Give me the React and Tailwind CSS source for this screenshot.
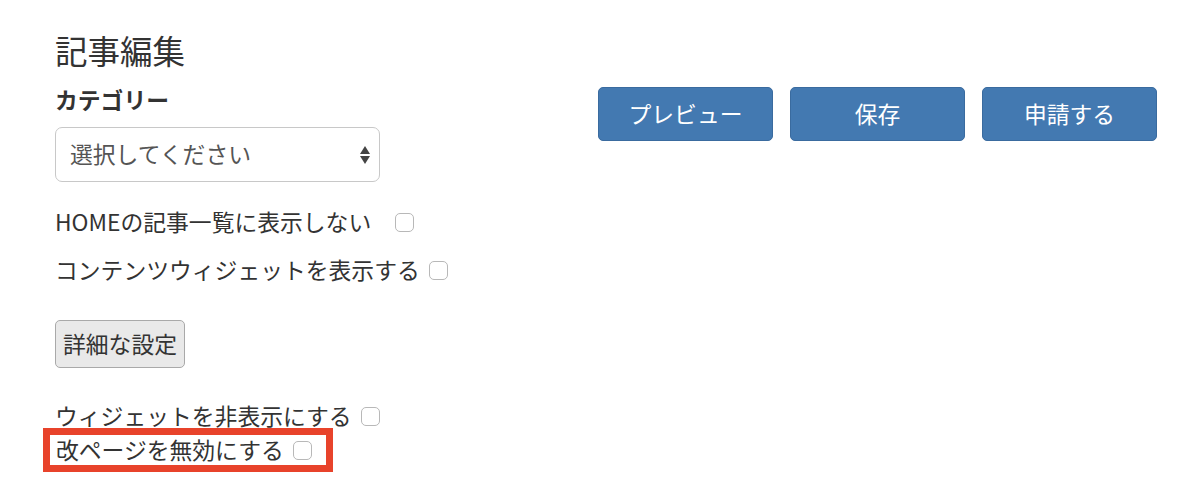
import React from "react";

function Check() {
  return (
    <input
      type="checkbox"
      className="appearance-none w-[19px] h-[19px] rounded-[5px] border border-[#b8b8b8] bg-white shrink-0"
    />
  );
}

export default function App() {
  const font = { fontFamily: '"Noto Sans CJK JP", "Noto Sans", sans-serif' };
  return (
    <div className="w-[1200px] h-[478px] bg-white text-[#333] pl-[55px]" style={font}>
      <div className="h-[72px] pt-[28px] flex items-center">
        <h1 className="text-[32.5px] leading-[44px] font-normal">記事編集</h1>
      </div>
      <div className="flex">
        <div className="w-[543px]">
          <div className="h-[32px] mt-[12px] flex items-center text-[22.8px] font-bold">カテゴリー</div>
          <div className="mt-[11px] w-[325px] h-[55px] border border-[#c8c8c8] rounded-[7px] flex items-center justify-between pl-[14px] pr-[8px]">
            <span className="text-[22.8px] text-[#555]">選択してください</span>
            <svg width="12" height="22" viewBox="0 0 12 22">
              <path d="M6 2 L11 10 L1 10 Z" fill="#444" />
              <path d="M6 20 L11 12 L1 12 Z" fill="#444" />
            </svg>
          </div>
          <div className="mt-[24px] h-[32px] flex items-center text-[22.8px]">
            <span>HOMEの記事一覧に表示しない</span>
            <span className="ml-[24px] flex"><Check /></span>
          </div>
          <div className="mt-[16px] h-[32px] flex items-center text-[22.8px]">
            <span>コンテンツウィジェットを表示する</span>
            <span className="ml-[9px] flex"><Check /></span>
          </div>
          <button className="mt-[34px] h-[48px] px-[7px] bg-[#e9e9e9] border border-[#a9a9a9] rounded-[5px] text-[22.8px] text-[#333]">
            詳細な設定
          </button>
          <div className="mt-[36px] h-[24px] flex items-center text-[22.8px]">
            <span>ウィジェットを非表示にする</span>
            <span className="ml-[9px] flex"><Check /></span>
          </div>
          <div className="-ml-[12px] w-[290px] h-[44px] border-[7px] border-[#e8432b] flex items-center pl-[6px] text-[22.8px]">
            <span>改ページを無効にする</span>
            <span className="ml-[9px] flex"><Check /></span>
          </div>
        </div>
        <div className="flex gap-[17px] mt-[15px] items-start">
          {["プレビュー", "保存", "申請する"].map((t) => (
            <button
              key={t}
              className="w-[175px] h-[54px] bg-[#4379b1] border border-[#3a6b9f] rounded-[5px] text-white text-[22.8px]"
            >
              {t}
            </button>
          ))}
        </div>
      </div>
    </div>
  );
}
